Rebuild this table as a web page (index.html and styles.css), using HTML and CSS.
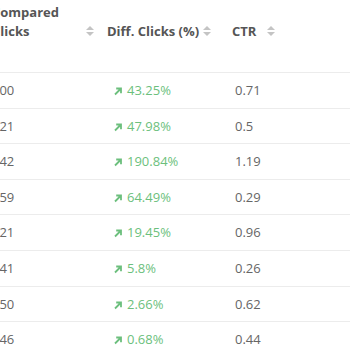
FILE: index.html
```html
<!DOCTYPE html>
<html>
<head>
<meta charset="utf-8">
<link rel="stylesheet" href="styles.css">
</head>
<body>
<div class="scroller">
<table class="report">
  <colgroup>
    <col class="c1"><col class="c2"><col class="c3"><col class="c4">
  </colgroup>
  <thead>
    <tr>
      <th class="h1"><div class="th-in"><span class="lbl narrow">Compared Clicks</span><span class="sort"></span></div></th>
      <th class="h2"><div class="th-in"><span class="lbl one">Diff. Clicks (%)</span><span class="sort"></span></div></th>
      <th class="h3"><div class="th-in"><span class="lbl one">CTR</span><span class="sort"></span></div></th>
      <th class="h4"></th>
    </tr>
  </thead>
  <tbody>
    <tr><td>100</td><td class="up"><svg class="arr" viewBox="0 0 10 10"><path d="M2 8.5 L8 2.5 M3.2 2.5 H8 V7.3"/></svg>43.25%</td><td>0.71</td><td></td></tr>
    <tr><td>121</td><td class="up"><svg class="arr" viewBox="0 0 10 10"><path d="M2 8.5 L8 2.5 M3.2 2.5 H8 V7.3"/></svg>47.98%</td><td>0.5</td><td></td></tr>
    <tr><td>142</td><td class="up"><svg class="arr" viewBox="0 0 10 10"><path d="M2 8.5 L8 2.5 M3.2 2.5 H8 V7.3"/></svg>190.84%</td><td>1.19</td><td></td></tr>
    <tr><td>159</td><td class="up"><svg class="arr" viewBox="0 0 10 10"><path d="M2 8.5 L8 2.5 M3.2 2.5 H8 V7.3"/></svg>64.49%</td><td>0.29</td><td></td></tr>
    <tr><td>121</td><td class="up"><svg class="arr" viewBox="0 0 10 10"><path d="M2 8.5 L8 2.5 M3.2 2.5 H8 V7.3"/></svg>19.45%</td><td>0.96</td><td></td></tr>
    <tr><td>141</td><td class="up"><svg class="arr" viewBox="0 0 10 10"><path d="M2 8.5 L8 2.5 M3.2 2.5 H8 V7.3"/></svg>5.8%</td><td>0.26</td><td></td></tr>
    <tr><td>150</td><td class="up"><svg class="arr" viewBox="0 0 10 10"><path d="M2 8.5 L8 2.5 M3.2 2.5 H8 V7.3"/></svg>2.66%</td><td>0.62</td><td></td></tr>
    <tr><td>146</td><td class="up"><svg class="arr" viewBox="0 0 10 10"><path d="M2 8.5 L8 2.5 M3.2 2.5 H8 V7.3"/></svg>0.68%</td><td>0.44</td><td></td></tr>
  </tbody>
</table>
</div>
</body>
</html>
```
FILE: styles.css
```css
html, body {
  margin: 0;
  padding: 0;
  background: #fff;
  overflow: hidden;
}
body {
  font-family: "Open Sans", "Liberation Sans", sans-serif;
  font-size: 13px;
  line-height: 1.42857143;
  color: #666;
}
.scroller {
  width: 350px;
  height: 350px;
  overflow: hidden;
}
.report {
  border-collapse: collapse;
  table-layout: fixed;
  width: 400px;
  margin-left: -16px;
}
.c1 { width: 121px; }
.c2 { width: 122px; }
.c3 { width: 56px; }
.c4 { width: 101px; }
th {
  text-align: left;
  font-weight: 700;
  color: #555;
  vertical-align: bottom;
  padding: 3px 8px 32px 8px;
  height: 37px;
}
.h1 { padding-right: 11px; }
.h2 { padding-left: 2px; padding-right: 18px; }
.h3 { padding-left: 5px; padding-right: 8px; }
.th-in {
  display: flex;
  justify-content: space-between;
  align-items: flex-end;
  gap: 4px;
}
.one { white-space: nowrap; }
.narrow { width: 66px; }
.sort {
  display: inline-flex;
  flex-direction: column;
  gap: 2px;
  width: 8px;
  flex: none;
  margin-bottom: 4px;
}
.sort::before, .sort::after {
  content: "";
  display: block;
  width: 0;
  height: 0;
  border-left: 4px solid transparent;
  border-right: 4px solid transparent;
}
.sort::before { border-bottom: 4px solid #c4c4c4; }
.sort::after { border-top: 4px solid #c4c4c4; }
td {
  border-top: 1px solid #ececec;
  padding: 8px;
  vertical-align: middle;
  white-space: nowrap;
}
.up { color: #6cbf7d; }
.arr {
  width: 10px;
  height: 10px;
  margin-right: 4px;
  vertical-align: -1px;
  fill: none;
  stroke: #6cbf7d;
  stroke-width: 1.8;
}
```
